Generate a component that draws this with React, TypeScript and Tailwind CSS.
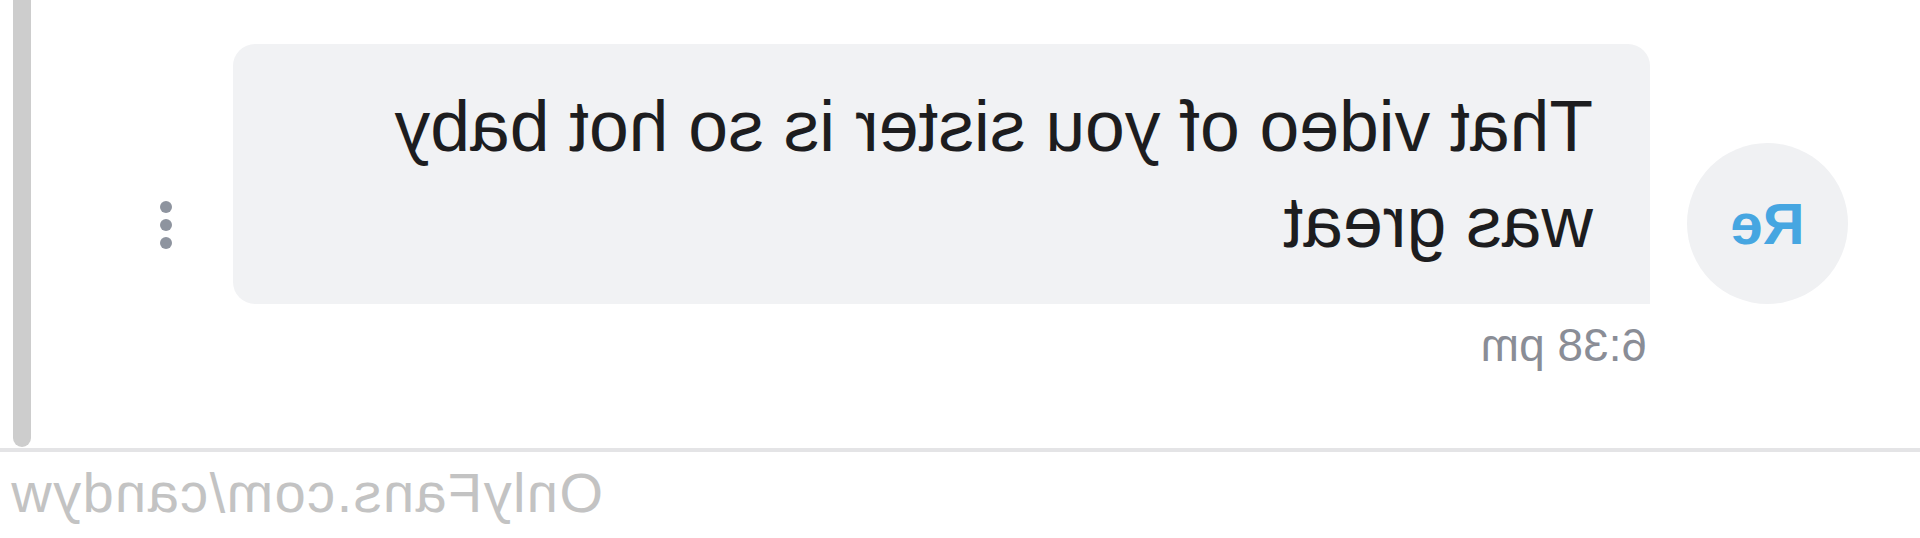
import React from 'react'

const font = { fontFamily: '"Liberation Sans", Arial, sans-serif' }

const Avatar = ({ initials }: { initials: string }) => (
  <div className="mt-[99px] flex h-[161px] w-[161px] shrink-0 items-center justify-center rounded-full bg-[#f0f1f3]">
    <span className="text-[58px] font-bold leading-none text-[#46a6e1]">{initials}</span>
  </div>
)

const MoreDots = () => (
  <div className="ml-[61px] mt-[157px] flex flex-col gap-[6px]">
    <span className="h-[12px] w-[12px] rounded-full bg-[#8e949f]" />
    <span className="h-[12px] w-[12px] rounded-full bg-[#8e949f]" />
    <span className="h-[12px] w-[12px] rounded-full bg-[#8e949f]" />
  </div>
)

export default function App() {
  return (
    <div style={font} className="flex h-[538px] w-[1920px] -scale-x-100 flex-col overflow-hidden bg-white">
      <div className="flex h-[448px] shrink-0">
        <div className="flex flex-1 items-start pl-[72px] pt-[44px]">
          <Avatar initials="Re" />
          <div className="ml-[37px] flex flex-col">
            <div className="w-[1417px] rounded-[22px] rounded-bl-none bg-[#f1f2f4] px-[57px] py-[34px] text-[71.4px] leading-[96px] text-[#1d1d1f]">
              That video of you sister is so hot baby was great
            </div>
            <span className="mt-[18px] pl-[3px] text-[46px] leading-none text-[#8a8d96]">6:38 pm</span>
          </div>
          <MoreDots />
        </div>
        <div className="mr-[13px] h-[447px] w-[18px] rounded-b-full bg-[#cdcdcd]" />
      </div>
      <div className="h-[4px] shrink-0 bg-[#e4e4e6]" />
      <div className="pr-[10px] pt-[13px] text-right text-[56px] leading-none tracking-[1.4px] text-[#c3c3c3]">
        OnlyFans.com/candyw
      </div>
    </div>
  )
}
